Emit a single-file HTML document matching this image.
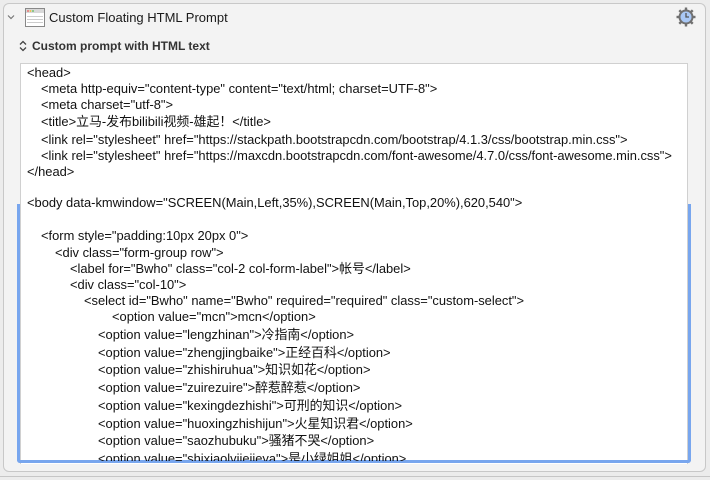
<!DOCTYPE html>
<html><head><meta charset="utf-8"><style>
body{margin:0;width:710px;height:480px;background:#ececec;position:relative;overflow:hidden;font-family:"Liberation Sans","Noto Sans CJK SC",sans-serif;}
.panel{position:absolute;left:3px;top:3px;width:701px;height:467px;background:#f3f3f3;border:1px solid #c8c8c8;border-radius:6px;}
.bottom{position:absolute;left:0;top:476px;width:710px;height:1px;background:#c6c6c6;}
.ta{position:absolute;left:20px;top:63px;width:666px;height:400px;background:#fff;border:1px solid #d0d0d0;border-bottom:none;overflow:hidden;}
.ring{position:absolute;left:17px;top:204px;width:668px;height:256px;border:3px solid #78a6ee;border-top:none;border-radius:0 0 3px 3px;}
.l{position:absolute;font-size:12.9px;color:#111;white-space:pre;line-height:14px;}
.t{position:absolute;font-size:13px;color:#1a1a1a;}
</style></head><body>
<div class="panel"></div>
<div class="bottom"></div>
<svg style="position:absolute;left:7px;top:14px" width="8" height="6" viewBox="0 0 8 6"><path d="M1 1.5l3 3 3-3" stroke="#777" stroke-width="1.2" fill="none"/></svg>
<svg style="position:absolute;left:25px;top:8px" width="20" height="19" viewBox="0 0 20 19"><rect x="0.5" y="0.5" width="19" height="18" fill="#fff" stroke="#888"/><rect x="1" y="1" width="18" height="4" fill="#d8d8d8"/><circle cx="3" cy="3" r="0.9" fill="#e55"/><circle cx="5.5" cy="3" r="0.9" fill="#eb3"/><circle cx="8" cy="3" r="0.9" fill="#5b5"/><line x1="2" y1="8.5" x2="18" y2="8.5" stroke="#ccc"/><line x1="2" y1="11.5" x2="18" y2="11.5" stroke="#ccc"/><line x1="2" y1="14.5" x2="18" y2="14.5" stroke="#ccc"/></svg>
<div class="t" style="left:49px;top:10px">Custom Floating HTML Prompt</div>
<svg style="position:absolute;left:676px;top:7px" width="20" height="20" viewBox="0 0 20 20"><g fill="#707070"><circle cx="10" cy="10" r="7.5"/><rect x="8.8" y="0.5" width="2.4" height="19"/><rect x="0.5" y="8.8" width="19" height="2.4"/><rect x="8.8" y="0.5" width="2.4" height="19" transform="rotate(45 10 10)"/><rect x="8.8" y="0.5" width="2.4" height="19" transform="rotate(-45 10 10)"/></g><circle cx="10" cy="10" r="5.5" fill="#a9c8f5"/><path d="M10 6v4h3" stroke="#555" stroke-width="1.3" fill="none"/></svg>
<svg style="position:absolute;left:19px;top:40px" width="8" height="12" viewBox="0 0 8 12"><path d="M1 4.5l3-3 3 3M1 7.5l3 3 3-3" stroke="#444" stroke-width="1.3" fill="none"/></svg>
<div class="t" style="left:32px;top:39px;font-size:12px;font-weight:bold;color:#333">Custom prompt with HTML text</div>
<div class="ta"></div>
<div class="ring"></div>
<div class="l" style="left:27px;top:66px">&lt;head&gt;</div>
<div class="l" style="left:41px;top:82px">&lt;meta http-equiv="content-type" content="text/html; charset=UTF-8"&gt;</div>
<div class="l" style="left:41px;top:98px">&lt;meta charset="utf-8"&gt;</div>
<div class="l" style="left:41px;top:115px">&lt;title&gt;立马-发布bilibili视频-雄起！&lt;/title&gt;</div>
<div class="l" style="left:41px;top:133px">&lt;link rel="stylesheet" href="https://stackpath.bootstrapcdn.com/bootstrap/4.1.3/css/bootstrap.min.css"&gt;</div>
<div class="l" style="left:41px;top:149px">&lt;link rel="stylesheet" href="https://maxcdn.bootstrapcdn.com/font-awesome/4.7.0/css/font-awesome.min.css"&gt;</div>
<div class="l" style="left:27px;top:165px">&lt;/head&gt;</div>
<div class="l" style="left:27px;top:196px">&lt;body data-kmwindow="SCREEN(Main,Left,35%),SCREEN(Main,Top,20%),620,540"&gt;</div>
<div class="l" style="left:41px;top:229px">&lt;form style="padding:10px 20px 0"&gt;</div>
<div class="l" style="left:55px;top:246px">&lt;div class="form-group row"&gt;</div>
<div class="l" style="left:70px;top:262px">&lt;label for="Bwho" class="col-2 col-form-label"&gt;帐号&lt;/label&gt;</div>
<div class="l" style="left:70px;top:278px">&lt;div class="col-10"&gt;</div>
<div class="l" style="left:84px;top:294px">&lt;select id="Bwho" name="Bwho" required="required" class="custom-select"&gt;</div>
<div class="l" style="left:112px;top:310px">&lt;option value="mcn"&gt;mcn&lt;/option&gt;</div>
<div class="l" style="left:98px;top:328px">&lt;option value="lengzhinan"&gt;冷指南&lt;/option&gt;</div>
<div class="l" style="left:98px;top:346px">&lt;option value="zhengjingbaike"&gt;正经百科&lt;/option&gt;</div>
<div class="l" style="left:98px;top:363px">&lt;option value="zhishiruhua"&gt;知识如花&lt;/option&gt;</div>
<div class="l" style="left:98px;top:381px">&lt;option value="zuirezuire"&gt;醉惹醉惹&lt;/option&gt;</div>
<div class="l" style="left:98px;top:399px">&lt;option value="kexingdezhishi"&gt;可刑的知识&lt;/option&gt;</div>
<div class="l" style="left:98px;top:417px">&lt;option value="huoxingzhishijun"&gt;火星知识君&lt;/option&gt;</div>
<div class="l" style="left:98px;top:434px">&lt;option value="saozhubuku"&gt;骚猪不哭&lt;/option&gt;</div>
<div style="position:absolute;left:22px;top:452px;width:663px;height:9px;overflow:hidden"><div class="l" style="left:76px;top:0">&lt;option value="shixiaolvjiejieya"&gt;是小绿姐姐&lt;/option&gt;</div></div>
</body></html>
